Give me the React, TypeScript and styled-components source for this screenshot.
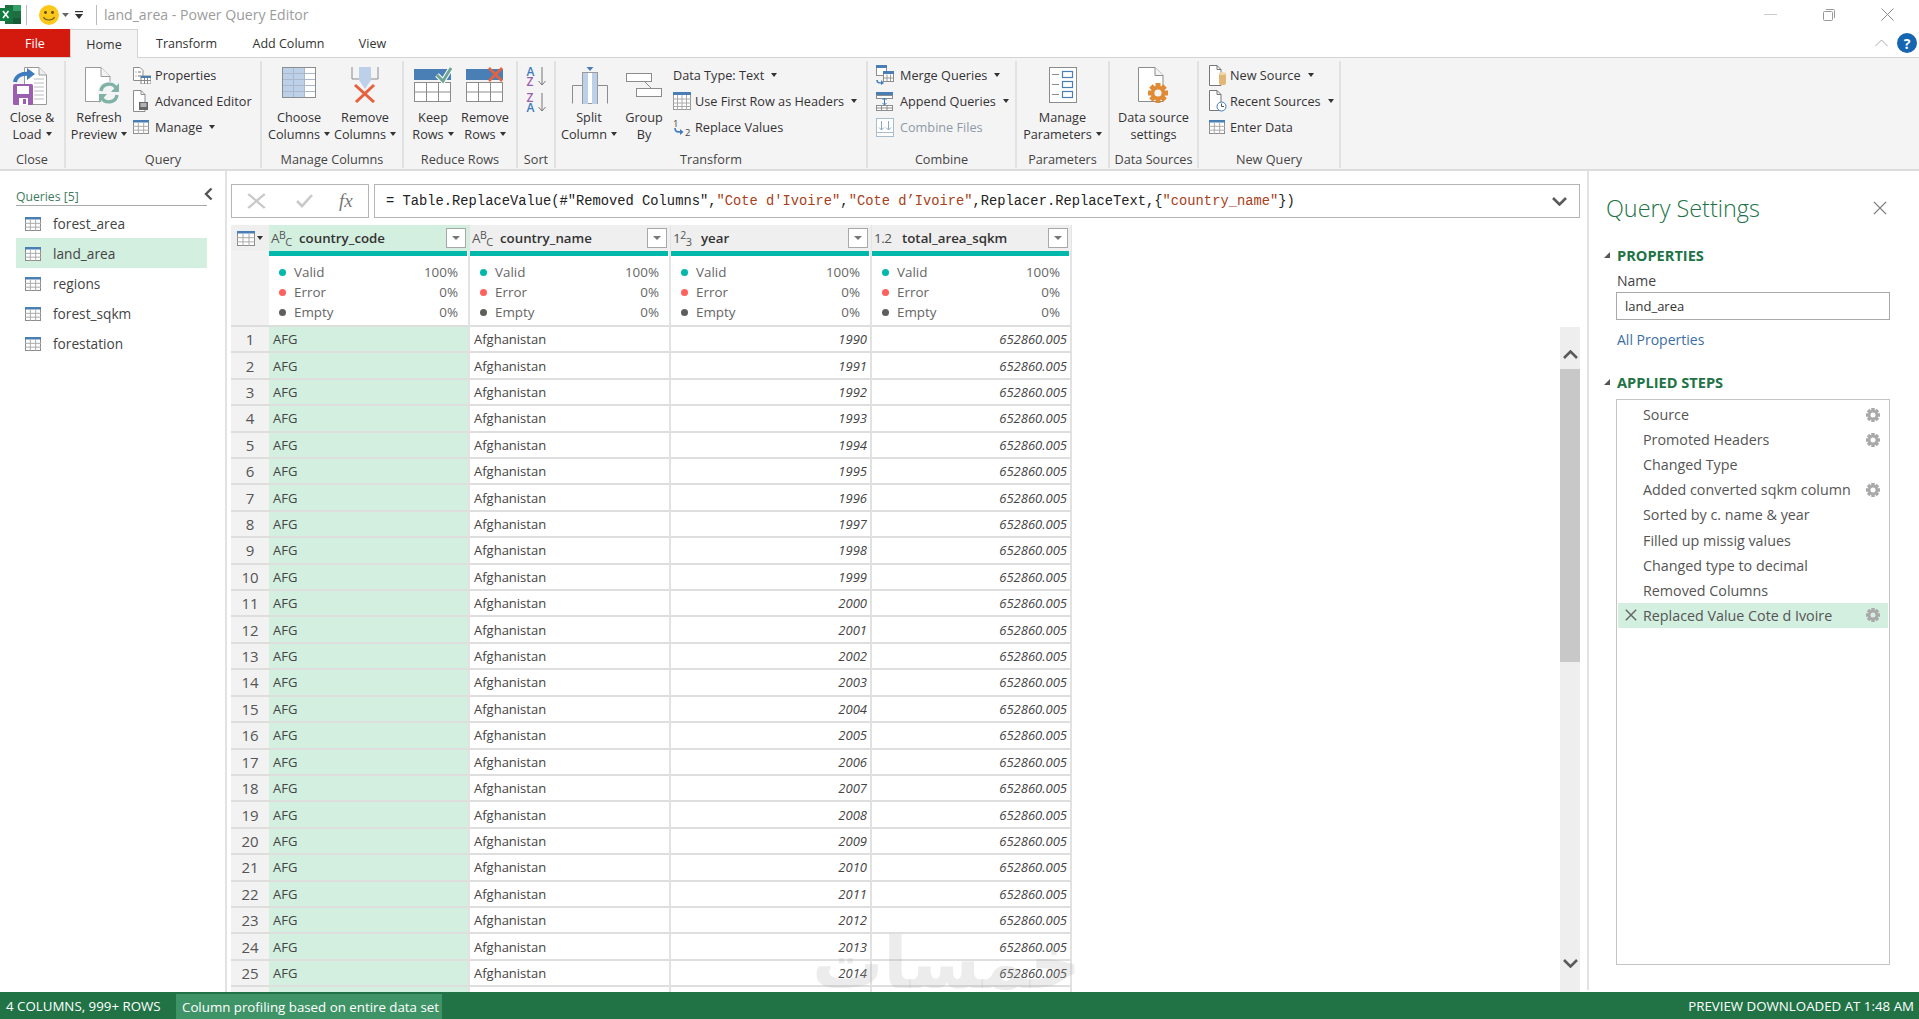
import React from "react";
import styled, { createGlobalStyle } from "styled-components";

const UI = `"Open Sans", "Noto Sans", "Liberation Sans", sans-serif`;

const Global = createGlobalStyle`
  html, body { margin: 0; padding: 0; background: #fff; }
  body { font-family: ${UI}; color: #333; overflow: hidden; }
  * { box-sizing: border-box; }
`;

const Page = styled.div`
  position: relative;
  width: 1919px;
  height: 1019px;
  display: flex;
  flex-direction: column;
  overflow: hidden;
  background: #fff;
`;

/* ---------- title bar ---------- */
const TitleBar = styled.div`
  height: 29px;
  flex: none;
  display: flex;
  align-items: center;
`;
const TitleSep = styled.span<{ $ml: number }>`
  width: 1px;
  height: 20px;
  background: #bbb;
  margin-left: ${(p) => p.$ml}px;
`;
const TitleText = styled.span`
  font-size: 14.1px;
  color: #9c9c9c;
  margin-left: 7px;
  white-space: nowrap;
`;
const WinControls = styled.div`
  margin-left: auto;
  display: flex;
  align-items: center;
  padding-right: 25px;
  gap: 46px;
`;
const QatSlot = styled.span<{ $ml: number }>`
  display: inline-flex;
  margin-left: ${(p) => p.$ml}px;
`;

/* ---------- tabs ---------- */
const TabBar = styled.div`
  height: 29px;
  flex: none;
  display: flex;
  align-items: stretch;
  border-bottom: 1px solid #d4d4d4;
  position: relative;
`;
const Tab = styled.div<{ $w: number; $active?: boolean; $file?: boolean }>`
  width: ${(p) => p.$w}px;
  height: ${(p) => (p.$active ? 29 : 28)}px;
  display: flex;
  align-items: center;
  justify-content: center;
  font-size: 12.5px;
  color: ${(p) => (p.$file ? "#fff" : "#333")};
  background: ${(p) => (p.$file ? "#d4190f" : p.$active ? "#f5f4f5" : "#fff")};
  border: ${(p) => (p.$active ? "1px solid #d4d4d4" : "none")};
  border-bottom: none;
`;
const TabRight = styled.div`
  margin-left: auto;
  display: flex;
  align-items: center;
  gap: 9px;
  padding-right: 2px;
`;
const Help = styled.span`
  width: 20px;
  height: 20px;
  border-radius: 50%;
  background: #1565b0;
  color: #fff;
  font: bold 14px ${UI};
  display: flex;
  align-items: center;
  justify-content: center;
`;

/* ---------- ribbon ---------- */
const Ribbon = styled.div`
  height: 113px;
  flex: none;
  background: #f5f4f5;
  border-bottom: 2px solid #dcdcdc;
  display: flex;
  padding: 3px 0 1px;
`;
const Group = styled.div<{ $w: number }>`
  width: ${(p) => p.$w}px;
  flex: none;
  display: flex;
  flex-direction: column;
  border-right: 2px solid #e3e2e3;
`;
const GroupBody = styled.div<{ $pl?: number }>`
  height: 90px;
  flex: none;
  display: flex;
  padding-left: ${(p) => p.$pl ?? 0}px;
`;
const GroupLabel = styled.div`
  height: 17px;
  line-height: 17px;
  font-size: 12.7px;
  text-align: center;
  color: #444;
  white-space: nowrap;
`;
const BigBtn = styled.div<{ $w: number }>`
  width: ${(p) => p.$w}px;
  flex: none;
  display: flex;
  flex-direction: column;
  align-items: center;
`;
const BigIcon = styled.div`
  height: 48px;
  display: flex;
  align-items: flex-start;
  justify-content: center;
  padding-top: 6px;
`;
const BigText = styled.div`
  font-size: 12.7px;
  line-height: 17px;
  text-align: center;
  color: #333;
  white-space: nowrap;
`;
const Caret = styled.span<{ $ml?: number }>`
  display: inline-block;
  width: 0;
  height: 0;
  border-left: 3.5px solid transparent;
  border-right: 3.5px solid transparent;
  border-top: 4px solid #333;
  margin-left: ${(p) => p.$ml ?? 4}px;
  vertical-align: 3px;
`;
const SmallCol = styled.div<{ $ml?: number }>`
  display: flex;
  flex-direction: column;
  padding-top: 1px;
  margin-left: ${(p) => p.$ml ?? 0}px;
`;
const SmallBtn = styled.div<{ $disabled?: boolean }>`
  height: 26px;
  display: flex;
  align-items: center;
  font-size: 12.7px;
  white-space: nowrap;
  color: ${(p) => (p.$disabled ? "#8d9aa5" : "#333")};
`;
const SmallIcon = styled.span<{ $w?: number }>`
  width: ${(p) => p.$w ?? 22}px;
  flex: none;
  display: flex;
  align-items: center;
`;
const SortCol = styled.div`
  width: 100%;
  display: flex;
  flex-direction: column;
  align-items: center;
  padding-top: 6px;
  gap: 6px;
`;
const SortMark = styled.div`
  width: 19px;
  height: 20px;
  display: flex;
  gap: 2px;
`;
const SortLetters = styled.div`
  width: 9px;
  flex: none;
  display: flex;
  flex-direction: column;
`;
const SortLetter = styled.span<{ $c: string }>`
  height: 10px;
  line-height: 10px;
  font-size: 12px;
  font-weight: 600;
  color: ${(p) => p.$c};
`;

/* ---------- workspace ---------- */
const Workspace = styled.div`
  flex: 1;
  min-height: 0;
  display: flex;
`;
const LeftPane = styled.aside`
  width: 227px;
  flex: none;
  border-right: 2px solid #e2e2e2;
  padding: 18px 18px 0 16px;
  position: relative;
`;
const QueriesHead = styled.div`
  font-size: 12.2px;
  color: #3f7a5e;
  height: 17px;
  line-height: 16px;
  border-bottom: 1px solid #a9a9a9;
  margin-bottom: 2px;
`;
const CollapseSlot = styled.span`
  position: absolute;
  left: 204px;
  top: 16px;
  display: flex;
`;
const QueryRow = styled.div<{ $sel?: boolean }>`
  height: 30px;
  display: flex;
  align-items: center;
  padding: 1px 0 0 9px;
  gap: 12px;
  font-size: 13.7px;
  color: #444;
  background: ${(p) => (p.$sel ? "#d3efe0" : "transparent")};
`;

const Center = styled.main`
  flex: 1;
  min-width: 0;
  display: flex;
  flex-direction: column;
  padding: 13px 7px 0 4px;
`;
const FormulaRow = styled.div`
  height: 34px;
  flex: none;
  display: flex;
  gap: 5px;
  margin-bottom: 7px;
`;
const FxBox = styled.div`
  width: 138px;
  flex: none;
  border: 1px solid #b5b5b5;
  display: flex;
  align-items: center;
  padding-left: 15px;
`;
const FxSlot = styled.span<{ $ml: number }>`
  display: flex;
  margin-left: ${(p) => p.$ml}px;
`;
const FxGlyph = styled.span`
  font: italic 19px "Liberation Serif", serif;
  color: #777;
  margin-left: 26px;
`;
const FormulaBox = styled.div`
  flex: 1;
  min-width: 0;
  border: 1px solid #b5b5b5;
  display: flex;
  align-items: center;
  padding: 0 12px 0 11px;
  font: 13.77px "Liberation Mono", monospace;
  color: #222;
  white-space: pre;
`;
const Str = styled.span`
  color: #a8401a;
`;
const FormulaChevron = styled.span`
  margin-left: auto;
  display: flex;
`;
const GridArea = styled.div`
  flex: 1;
  min-height: 0;
  display: flex;
  justify-content: space-between;
  overflow: hidden;
`;
const Table = styled.div`
  width: 841px;
  flex: none;
  overflow: hidden;
`;
const TR = styled.div`
  display: grid;
  grid-template-columns: 38px 201px 201px 201px 200px;
`;
const CornerCell = styled.div`
  height: 26px;
  background: #efefef;
  display: flex;
  align-items: center;
  padding-left: 6px;
  gap: 2px;
`;
const HeadCell = styled.div<{ $sel?: boolean }>`
  height: 26px;
  background: ${(p) => (p.$sel ? "#d3efe0" : "#efefef")};
  border-right: 1px solid #e4e4e4;
  display: flex;
  align-items: center;
  padding-left: 2px;
  font-size: 13.3px;
  font-weight: 600;
  color: #333;
`;
const TypeGlyph = styled.span`
  width: 28px;
  flex: none;
  font-size: 13.5px;
  font-weight: 400;
  color: #555;
  letter-spacing: -0.5px;
  display: inline-flex;
  align-items: center;
`;
const Sup = styled.span`
  font-size: 10.5px;
  transform: translateY(-3px);
`;
const Sub = styled.span`
  font-size: 11px;
  transform: translateY(3px);
`;
const DropBtn = styled.span`
  margin-left: auto;
  margin-right: 3px;
  width: 20px;
  height: 20px;
  background: #fff;
  border: 1px solid #a8a8a8;
  display: flex;
  align-items: center;
  justify-content: center;
`;
const DropTri = styled.span`
  width: 0;
  height: 0;
  border-left: 4px solid transparent;
  border-right: 4px solid transparent;
  border-top: 4px solid #777;
`;
const IndexProfile = styled.div`
  height: 76px;
  background: #f2f2f2;
  border-bottom: 2px solid #dedede;
`;
const ProfileCell = styled.div`
  height: 76px;
  background: #fff;
  border-right: 2px solid #e4e4e4;
  border-bottom: 2px solid #dedede;
`;
const Strip = styled.div`
  height: 5px;
  background: #01b8aa;
  margin-right: 1px;
`;
const ProfileLines = styled.div`
  padding: 6px 10px 0 10px;
`;
const ProfileLine = styled.div`
  height: 20px;
  display: flex;
  align-items: center;
  font-size: 13.4px;
  color: #666;
`;
const Dot = styled.span<{ $c: string }>`
  width: 7px;
  height: 7px;
  border-radius: 50%;
  background: ${(p) => p.$c};
  margin-right: 8px;
  flex: none;
`;
const Pct = styled.span`
  margin-left: auto;
`;
const IndexCell = styled.div`
  height: 26.42px;
  background: #f2f2f2;
  border-bottom: 2px solid #dedede;
  font-size: 15px;
  color: #555;
  display: flex;
  align-items: center;
  justify-content: center;
`;
const DataCell = styled.div<{ $sel?: boolean; $right?: boolean }>`
  height: 26.42px;
  background: ${(p) => (p.$sel ? "#d3efe0" : "#fff")};
  border-right: 2px solid #e2e2e2;
  border-bottom: 2px solid #dedede;
  font-size: 13px;
  font-style: ${(p) => (p.$right ? "italic" : "normal")};
  color: #444;
  display: flex;
  align-items: center;
  justify-content: ${(p) => (p.$right ? "flex-end" : "flex-start")};
  padding: 0 3px 0 4px;
`;
const ScrollBar = styled.div`
  width: 20px;
  flex: none;
  margin-top: 102px;
  background: #eee;
  display: flex;
  flex-direction: column;
`;
const ScrollEnd = styled.div<{ $bottom?: boolean }>`
  height: 42px;
  display: flex;
  justify-content: center;
  align-items: ${(p) => (p.$bottom ? "flex-start" : "center")};
  padding-top: ${(p) => (p.$bottom ? 9 : 12)}px;
  flex: none;
`;
const ScrollThumb = styled.div`
  height: 293px;
  background: #c8c8c8;
  flex: none;
`;
const ScrollGap = styled.div`
  flex: 1;
`;

const RightPane = styled.aside`
  width: 332px;
  flex: none;
  border-left: 2px solid #e2e2e2;
  padding: 0 29px 0 27px;
  margin-bottom: 2px;
  display: flex;
  flex-direction: column;
`;
const SettingsHead = styled.div`
  height: 74px;
  display: flex;
  align-items: center;
  justify-content: space-between;
  margin-left: -10px;
  font-size: 23.4px;
  font-weight: 300;
  color: #217346;
  padding-right: 3px;
`;
const SectionHead = styled.div<{ $mt?: number }>`
  display: flex;
  align-items: center;
  height: 20px;
  margin-top: ${(p) => p.$mt ?? 0}px;
  margin-left: -12px;
  gap: 7px;
  font-size: 14.6px;
  font-weight: 700;
  color: #217346;
`;
const Tri = styled.span`
  width: 0;
  height: 0;
  border-left: 6px solid transparent;
  border-bottom: 6px solid #555;
`;
const FieldLabel = styled.div`
  font-size: 14px;
  line-height: 18px;
  color: #444;
  margin-top: 7px;
  padding-left: 1px;
`;
const NameInput = styled.div`
  height: 28px;
  border: 1px solid #a9a9a9;
  margin-top: 2px;
  display: flex;
  align-items: center;
  padding-left: 8px;
  font-size: 13px;
  color: #333;
`;
const PropLink = styled.div`
  margin-top: 11px;
  padding-left: 1px;
  font-size: 14px;
  line-height: 18px;
  color: #3a6ea5;
`;
const StepsBox = styled.div`
  height: 566px;
  margin-top: 7px;
  border: 1px solid #c4c4c4;
  padding: 2px 1px 0;
`;
const StepRow = styled.div<{ $sel?: boolean }>`
  height: 25.1px;
  display: flex;
  align-items: center;
  background: ${(p) => (p.$sel ? "#d3efe0" : "transparent")};
  font-size: 14.3px;
  color: #555;
  padding-right: 8px;
`;
const StepX = styled.span`
  width: 25px;
  flex: none;
  display: flex;
  justify-content: center;
`;
const StepGear = styled.span`
  margin-left: auto;
  display: flex;
`;
const StatusBar = styled.footer`
  height: 27px;
  flex: none;
  background: #217346;
  color: #fff;
  font-size: 13.3px;
  display: flex;
  align-items: stretch;
  padding-left: 6px;
  padding-right: 5px;
  white-space: nowrap;
`;
const StatusCount = styled.span`
  width: 170px;
  display: flex;
  align-items: center;
`;
const StatusNote = styled.span`
  width: 266px;
  margin-top: 2px;
  background: #3f9467;
  display: flex;
  align-items: center;
  padding-left: 6px;
`;
const StatusRight = styled.span`
  margin-left: auto;
  display: flex;
  align-items: center;
`;
const Watermark = styled.div`
  position: absolute;
  left: 812px;
  top: 914px;
  font: bold 71px "DejaVu Sans", sans-serif;
  line-height: 100px;
  color: rgba(170, 170, 170, 0.22);
  pointer-events: none;
  white-space: nowrap;
`;

/* ---------- icons ---------- */
const B = "#4a7fb5";
const LB = "#bdd0e9";
const O = "#e8603c";

const ExcelLogo = () => (
  <svg width="21" height="19" viewBox="0 0 21 19">
    <rect x="5" y="0" width="16" height="19" fill="#1e6e42" />
    <rect x="13" y="0" width="8" height="6" fill="#33a06a" />
    <rect x="13" y="13" width="8" height="6" fill="#185c36" />
    <rect x="0" y="3" width="12" height="13" fill="#107c41" />
    <path d="M3 6l5.5 7M8.5 6L3 13" stroke="#fff" strokeWidth="1.6" />
  </svg>
);
const Smiley = () => (
  <svg width="20" height="20" viewBox="0 0 20 20">
    <circle cx="10" cy="10" r="10" fill="#fbc71a" />
    <circle cx="6.5" cy="7.5" r="1.4" fill="#5a4a10" />
    <circle cx="13.5" cy="7.5" r="1.4" fill="#5a4a10" />
    <path d="M4.5 12c2 4 9 4 11 0" stroke="#6a5510" strokeWidth="1.2" fill="none" />
  </svg>
);
const QatCaret = () => (
  <svg width="7" height="9" viewBox="0 0 7 9">
    <path d="M0 3h7L3.5 7z" fill="#666" />
  </svg>
);
const QatMore = () => (
  <svg width="8" height="10" viewBox="0 0 8 10">
    <rect x="0" y="1" width="8" height="1.2" fill="#333" />
    <path d="M0 4h8L4 9z" fill="#333" />
  </svg>
);
const WinMin = () => (
  <svg width="13" height="2" viewBox="0 0 13 2">
    <rect width="13" height="1" fill="#ccc" />
  </svg>
);
const WinRestore = () => (
  <svg width="12" height="12" viewBox="0 0 12 12" fill="none" stroke="#999">
    <rect x="0.5" y="2.5" width="9" height="9" rx="1" />
    <path d="M3 .5h7.5a1 1 0 0 1 1 1V9" />
  </svg>
);
const WinClose = () => (
  <svg width="13" height="13" viewBox="0 0 13 13" stroke="#8a8a8a" strokeWidth="1">
    <path d="M.5.5l12 12M12.5.5l-12 12" />
  </svg>
);
const ChevronUpThin = () => (
  <svg width="13" height="8" viewBox="0 0 13 8" fill="none" stroke="#aaa">
    <path d="M.5 7l6-6 6 6" />
  </svg>
);

const TableIco = ({ w = 16, h = 14 }: { w?: number; h?: number }) => {
  const c1 = w / 3;
  const rows = (h - 2.5) / 3;
  return (
    <svg width={w} height={h} viewBox={`0 0 ${w} ${h}`}>
      <rect x="0.5" y="0.5" width={w - 1} height={h - 1} fill="#fff" stroke="#8c8c8c" />
      <rect x="0" y="0" width={w} height="2.5" fill={B} />
      {[1, 2].map((i) => (
        <path key={i} d={`M${c1 * i} 2.5V${h}`} stroke="#aaa" strokeWidth="1" />
      ))}
      {[1, 2].map((i) => (
        <path key={i} d={`M0 ${2.5 + rows * i}H${w}`} stroke="#aaa" strokeWidth="1" />
      ))}
    </svg>
  );
};

const Gear = ({ size = 14, color = "#a9a9a9", hole = "#fff" }: { size?: number; color?: string; hole?: string }) => (
  <svg width={size} height={size} viewBox="0 0 20 20">
    {[0, 45, 90, 135].map((a) => (
      <rect key={a} x="7.5" y="0" width="5" height="20" fill={color} transform={`rotate(${a} 10 10)`} />
    ))}
    <circle cx="10" cy="10" r="7.2" fill={color} />
    <circle cx="10" cy="10" r="3.6" fill={hole} />
  </svg>
);

const CloseLoadIco = () => (
  <svg width="38" height="38" viewBox="0 0 38 38">
    <path d="M11.5.5H26l7.5 7.5v29.5H11.5z" fill="#fff" stroke="#9a9a9a" />
    <path d="M26 .5V8h7.5" fill="#eee" stroke="#9a9a9a" />
    {[12, 16, 20, 24, 28, 32].map((y) => (
      <path key={y} d={`M21 ${y}h10`} stroke="#bbb" />
    ))}
    <path d="M2 15c1-7 8-9 15-8" fill="none" stroke="#3f7cbf" strokeWidth="4" />
    <path d="M14 1l8 6-8 6z" fill="#3f7cbf" />
    <rect x="0" y="17" width="20" height="21" rx="1.5" fill="#9b5fb0" />
    <rect x="4" y="19" width="12" height="8" fill="#fff" />
    <rect x="6" y="31" width="9" height="7" fill="#fff" />
    <rect x="10" y="32" width="3" height="5" fill="#9b5fb0" />
  </svg>
);
const RefreshIco = () => (
  <svg width="44" height="38" viewBox="-8 0 44 38">
    <path d="M.5.5H16l9 9v25H.5z" fill="#fff" stroke="#9a9a9a" />
    <path d="M16 .5v9h9" fill="#f4f4f4" stroke="#9a9a9a" />
    <circle cx="24" cy="26" r="11.5" fill="#f5f4f5" />
    <path d="M16 24c1-8 12-9 15-3" fill="none" stroke="#7fb3a6" strokeWidth="3.4" />
    <path d="M34 16v9h-8z" fill="#7fb3a6" />
    <path d="M32 28c-1 8-12 9-15 3" fill="none" stroke="#7fb3a6" strokeWidth="3.4" />
    <path d="M14 36v-9h8z" fill="#7fb3a6" />
  </svg>
);
const ChooseIco = () => (
  <svg width="34" height="31" viewBox="0 0 34 31">
    <rect x="0.5" y="0.5" width="33" height="30" fill="#fff" stroke="#8c8c8c" />
    <rect x="1" y="1" width="22" height="29" fill={LB} />
    {[6.5, 12.5, 18.5, 24.5].map((y) => (
      <path key={y} d={`M1 ${y}h32`} stroke="#aab8c9" />
    ))}
    {[11.5, 22.5].map((x) => (
      <path key={x} d={`M${x} 1v29`} stroke="#aab8c9" />
    ))}
  </svg>
);
const RemoveColIco = () => (
  <svg width="28" height="36" viewBox="0 0 28 36">
    <path d="M1 0v12h7M27 0v12h-7" fill="none" stroke="#8c8c8c" />
    <path d="M8 0h12v13l-6 9-6-9z" fill={LB} />
    <path d="M4 18l19 17M23 18L5 35" stroke={O} strokeWidth="3" />
  </svg>
);
const KeepRowsIco = () => (
  <svg width="38" height="35" viewBox="0 0 38 35">
    <rect x="0" y="2" width="37" height="11" fill={B} />
    <rect x="0.5" y="15.5" width="36" height="19" fill="#fff" stroke="#8c8c8c" />
    <path d="M12.5 15v20M24.5 15v20M0 25h37" stroke="#8c8c8c" />
    <path d="M23 8l6 6L37 1" fill="none" stroke="#fff" strokeWidth="5" />
    <path d="M23 8l6 6L37 1" fill="none" stroke="#6fa597" strokeWidth="3" />
  </svg>
);
const RemoveRowsIco = () => (
  <svg width="38" height="35" viewBox="0 0 38 35">
    <rect x="0" y="2" width="37" height="11" fill={B} />
    <rect x="0.5" y="15.5" width="36" height="19" fill="#fff" stroke="#8c8c8c" />
    <path d="M12.5 15v20M24.5 15v20M0 25h37" stroke="#8c8c8c" />
    <path d="M23 1l13 13M36 1L23 14" stroke={O} strokeWidth="2.6" />
  </svg>
);
const SortArrow = () => (
  <svg width="8" height="20" viewBox="0 0 8 20">
    <path d="M4 0v18M.5 14L4 18l3.5-4" fill="none" stroke="#777" />
  </svg>
);
const SplitIco = () => (
  <svg width="38" height="37" viewBox="-2 0 38 37">
    <path d="M14.5 0h7L18 4z" fill={B} />
    <path d="M.5 36.5V18.5h9.5M35.5 36.5V18.5H26" fill="none" stroke="#8c8c8c" />
    <rect x="10.5" y="5.5" width="15" height="31" fill="#fff" stroke="#9a9a9a" />
    <rect x="11" y="6" width="5" height="31" fill={LB} />
    <rect x="20" y="6" width="5" height="31" fill={LB} />
  </svg>
);
const GroupByIco = () => (
  <svg width="37" height="31" viewBox="0 -6 37 31">
    <rect x="0.5" y="0.5" width="25" height="8" fill="#fff" stroke="#8c8c8c" />
    <rect x="10.5" y="15.5" width="25" height="8" fill="#fff" stroke="#8c8c8c" />
    <path d="M18 8l7 7" stroke="#8c8c8c" />
  </svg>
);
const ParamsIco = () => (
  <svg width="28" height="36" viewBox="0 0 28 36">
    <rect x="0.5" y="0.5" width="27" height="35" fill="#fff" stroke="#8c8c8c" />
    {[5, 15, 25].map((y) => (
      <g key={y}>
        <path d={`M3 ${y + 2.5}h7`} stroke="#8c8c8c" />
        <rect x="13.5" y={y - 0.5} width="10" height="6" fill="none" stroke={B} strokeWidth="1.2" />
      </g>
    ))}
  </svg>
);
const DataSourceIco = () => (
  <svg width="32" height="36" viewBox="0 0 32 36">
    <path d="M.5.5H17l8 8v26H.5z" fill="#fff" stroke="#8c8c8c" />
    <path d="M17 .5v8h8" fill="#f4f4f4" stroke="#8c8c8c" />
    <g transform="translate(10 16)">
      <Gear size={20} color="#e08a35" hole="#f5f4f5" />
    </g>
  </svg>
);
const PropsIco = () => (
  <svg width="18" height="17" viewBox="0 0 18 17">
    <path d="M.5.5H7l3 3v10H.5z" fill="#fff" stroke="#8c8c8c" />
    <path d="M2.5 5h1M5 5h3M2.5 9h1M5 9h3" stroke="#777" />
    <rect x="8" y="9" width="10" height="8" fill="#fff" stroke="#888" />
    <rect x="8" y="9" width="10" height="2" fill={B} />
    <path d="M11.5 11v6M14.5 11v6M8 13.5h10" stroke="#888" />
  </svg>
);
const AdvIco = () => (
  <svg width="16" height="22" viewBox="0 0 16 22">
    <path d="M.5.5H8l4 4v17H.5z" fill="#fff" stroke="#8c8c8c" />
    <path d="M8 .5v4h4" fill="none" stroke="#8c8c8c" />
    <rect x="6" y="12" width="9" height="8" fill="#666" />
    <path d="M7.5 14h6M7.5 16h6" stroke="#fff" />
  </svg>
);
const MergeIco = () => (
  <svg width="18" height="20" viewBox="0 0 18 20">
    <rect x="0.5" y="0.5" width="10" height="10" fill="#fff" stroke="#8c8c8c" />
    <rect x="0" y="0" width="11" height="3" fill={B} />
    <rect x="7.5" y="6.5" width="10" height="10" fill="#fff" stroke="#8c8c8c" />
    <rect x="7" y="6" width="11" height="3" fill={B} />
    <path d="M11 9.5v7M14.5 9.5v7M7 13h11" stroke="#999" />
    <path d="M1 15c0 3 2 3 5 3" fill="none" stroke="#3f7cbf" strokeWidth="1.6" />
    <path d="M5 15l3 3-3 2z" fill="#3f7cbf" />
  </svg>
);
const AppendIco = () => (
  <svg width="17" height="19" viewBox="0 0 17 19">
    <rect x="0" y="0" width="17" height="3" fill={B} />
    <rect x="0.5" y="3.5" width="16" height="3" fill="#fff" stroke="#8c8c8c" />
    <rect x="0.5" y="13.5" width="16" height="5" fill="#fff" stroke="#8c8c8c" />
    <path d="M5.5 13v6M11 13v6M0 16h17" stroke="#8c8c8c" />
    <path d="M8.5 6v7M6.5 8l2-2 2 2M6.5 11l2 2 2-2" fill="none" stroke="#3f7cbf" />
  </svg>
);
const CombineIco = () => (
  <svg width="18" height="19" viewBox="0 0 18 19">
    <rect x="0.5" y="0.5" width="17" height="18" fill="#fff" stroke="#a9bccb" />
    <path d="M1 14.5h16" stroke="#a9bccb" />
    <path d="M5.5 3v9M3 9.5l2.5 2.5L8 9.5M12.5 3v9M10 9.5l2.5 2.5L15 9.5" fill="none" stroke="#8da9c2" />
  </svg>
);
const FirstRowIco = () => (
  <svg width="18" height="18" viewBox="0 0 18 18">
    <rect x="0.5" y="0.5" width="17" height="17" fill="#fff" stroke="#999" />
    <rect x="0" y="0" width="18" height="3" fill={B} />
    <path d="M4.5 3v15M9 3v15M13.5 3v15M0 7h18M0 11h18M0 14.5h18" stroke="#aaa" />
  </svg>
);
const ReplaceIco = () => (
  <svg width="20" height="24" viewBox="0 -3 20 24">
    <text x="0" y="9" fontSize="9.5" fontFamily="Open Sans, sans-serif" fill="#444">1</text>
    <text x="12" y="18" fontSize="9.5" fontFamily="Open Sans, sans-serif" fill="#444">2</text>
    <path d="M2 10c0 4 2 4 6 4" fill="none" stroke="#3f7cbf" strokeWidth="1.6" />
    <path d="M7 11l3.5 3L7 17z" fill="#3f7cbf" />
  </svg>
);
const NewSourceIco = () => (
  <svg width="18" height="21" viewBox="0 0 18 21">
    <path d="M.5.5H8l4 4v16H.5z" fill="#fff" stroke="#777" />
    <path d="M8 .5v4h4" fill="none" stroke="#777" />
    <rect x="10" y="8" width="7" height="12" rx="2" fill="#e0b775" />
    <ellipse cx="13.5" cy="8.5" rx="3.5" ry="1.6" fill="#f0d7a8" />
  </svg>
);
const RecentIco = () => (
  <svg width="18" height="23" viewBox="0 0 18 23">
    <path d="M.5.5H8l4 4v16H.5z" fill="#fff" stroke="#777" />
    <path d="M8 .5v4h4" fill="none" stroke="#777" />
    <circle cx="12.5" cy="16.5" r="4.5" fill="#fff" stroke="#3f7cbf" />
    <path d="M12.5 13.5v3h2.5" fill="none" stroke="#555" />
  </svg>
);
const ChevronLeft = () => (
  <svg width="9" height="14" viewBox="0 0 9 14" fill="none" stroke="#555" strokeWidth="2.4">
    <path d="M7.5 1.5L2 7l5.5 5.5" />
  </svg>
);
const ChevronV = ({ up }: { up?: boolean }) => (
  <svg width="15" height="9" viewBox="0 0 15 9" fill="none" stroke="#5a5a5a" strokeWidth="2.6">
    <path d={up ? "M1 8l6.5-6.5L14 8" : "M1 1l6.5 6.5L14 1"} />
  </svg>
);
const CrossIco = ({ w = 15, h = 15, color = "#c9c9c9", sw = 2 }: { w?: number; h?: number; color?: string; sw?: number }) => (
  <svg width={w} height={h} viewBox="0 0 15 15" preserveAspectRatio="none" stroke={color} strokeWidth={sw}>
    <path d="M1 1l13 13M14 1L1 14" />
  </svg>
);
const CheckIco = () => (
  <svg width="17" height="14" viewBox="0 0 17 14" fill="none" stroke="#c9c9c9" strokeWidth="2.6">
    <path d="M1 7l5 5L16 1" />
  </svg>
);

/* ---------- data ---------- */
const COLUMNS = [
  { name: "country_code", type: "abc", sel: true },
  { name: "country_name", type: "abc" },
  { name: "year", type: "123" },
  { name: "total_area_sqkm", type: "dec" },
];
const PROFILE = [
  { label: "Valid", pct: "100%", color: "#01b8aa" },
  { label: "Error", pct: "0%", color: "#fd625e" },
  { label: "Empty", pct: "0%", color: "#605e5c" },
];
const STEPS = [
  { name: "Source", gear: true },
  { name: "Promoted Headers", gear: true },
  { name: "Changed Type" },
  { name: "Added converted sqkm column", gear: true },
  { name: "Sorted by c. name & year" },
  { name: "Filled up missig values" },
  { name: "Changed type to decimal" },
  { name: "Removed Columns" },
  { name: "Replaced Value Cote d Ivoire", gear: true, sel: true },
];
const QUERIES = ["forest_area", "land_area", "regions", "forest_sqkm", "forestation"];
const ROWS = Array.from({ length: 26 }, (_, i) => i);

const TypeMark = ({ type }: { type: string }) => {
  if (type === "abc")
    return (
      <TypeGlyph>
        A<Sup>B</Sup>
        <Sub>C</Sub>
      </TypeGlyph>
    );
  if (type === "123")
    return (
      <TypeGlyph>
        1<Sup>2</Sup>
        <Sub>3</Sub>
      </TypeGlyph>
    );
  return <TypeGlyph>1.2</TypeGlyph>;
};

const Big = ({ w, icon, lines, caret }: { w: number; icon: React.ReactNode; lines: [string, string]; caret?: boolean }) => (
  <BigBtn $w={w}>
    <BigIcon>{icon}</BigIcon>
    <BigText>
      {lines[0]}
      <br />
      {lines[1]}
      {caret && <Caret />}
    </BigText>
  </BigBtn>
);

const Small = ({ icon, text, caret, w, disabled }: { icon?: React.ReactNode; text: string; caret?: boolean; w?: number; disabled?: boolean }) => (
  <SmallBtn $disabled={disabled}>
    {icon && <SmallIcon $w={w}>{icon}</SmallIcon>}
    {text}
    {caret && <Caret $ml={7} />}
  </SmallBtn>
);

const Sort = ({ top, bottom, topC, botC }: { top: string; bottom: string; topC: string; botC: string }) => (
  <SortMark>
    <SortLetters>
      <SortLetter $c={topC}>{top}</SortLetter>
      <SortLetter $c={botC}>{bottom}</SortLetter>
    </SortLetters>
    <SortArrow />
  </SortMark>
);

export default function App() {
  return (
    <Page>
      <Global />
      <TitleBar>
        <ExcelLogo />
        <TitleSep $ml={5} />
        <QatSlot $ml={12}><Smiley /></QatSlot>
        <QatSlot $ml={3}><QatCaret /></QatSlot>
        <QatSlot $ml={6}><QatMore /></QatSlot>
        <TitleSep $ml={13} />
        <TitleText>land_area - Power Query Editor</TitleText>
        <WinControls>
          <WinMin />
          <WinRestore />
          <WinClose />
        </WinControls>
      </TitleBar>

      <TabBar>
        <Tab $w={70} $file>File</Tab>
        <Tab $w={68} $active>Home</Tab>
        <Tab $w={97}>Transform</Tab>
        <Tab $w={107}>Add Column</Tab>
        <Tab $w={61}>View</Tab>
        <TabRight>
          <ChevronUpThin />
          <Help>?</Help>
        </TabRight>
      </TabBar>

      <Ribbon>
        <Group $w={66}>
          <GroupBody>
            <Big w={64} icon={<CloseLoadIco />} lines={["Close &", "Load"]} caret />
          </GroupBody>
          <GroupLabel>Close</GroupLabel>
        </Group>
        <Group $w={196}>
          <GroupBody>
            <Big w={66} icon={<RefreshIco />} lines={["Refresh", "Preview"]} caret />
            <SmallCol $ml={1}>
              <Small icon={<PropsIco />} text="Properties" />
              <Small icon={<AdvIco />} text="Advanced Editor" />
              <Small icon={<TableIco />} text="Manage" caret />
            </SmallCol>
          </GroupBody>
          <GroupLabel>Query</GroupLabel>
        </Group>
        <Group $w={142}>
          <GroupBody $pl={2}>
            <Big w={70} icon={<ChooseIco />} lines={["Choose", "Columns"]} caret />
            <Big w={62} icon={<RemoveColIco />} lines={["Remove", "Columns"]} caret />
          </GroupBody>
          <GroupLabel>Manage Columns</GroupLabel>
        </Group>
        <Group $w={114}>
          <GroupBody $pl={2}>
            <Big w={54} icon={<KeepRowsIco />} lines={["Keep", "Rows"]} caret />
            <Big w={50} icon={<RemoveRowsIco />} lines={["Remove", "Rows"]} caret />
          </GroupBody>
          <GroupLabel>Reduce Rows</GroupLabel>
        </Group>
        <Group $w={38}>
          <GroupBody>
            <SortCol>
              <Sort top="A" bottom="Z" topC="#3f7cbf" botC="#9b5fb0" />
              <Sort top="Z" bottom="A" topC="#9b5fb0" botC="#3f7cbf" />
            </SortCol>
          </GroupBody>
          <GroupLabel>Sort</GroupLabel>
        </Group>
        <Group $w={312}>
          <GroupBody>
            <Big w={66} icon={<SplitIco />} lines={["Split", "Column"]} caret />
            <Big w={44} icon={<GroupByIco />} lines={["Group", "By"]} />
            <SmallCol $ml={7}>
              <Small text="Data Type: Text" caret />
              <Small icon={<FirstRowIco />} text="Use First Row as Headers" caret />
              <Small icon={<ReplaceIco />} text="Replace Values" />
            </SmallCol>
          </GroupBody>
          <GroupLabel>Transform</GroupLabel>
        </Group>
        <Group $w={149}>
          <GroupBody $pl={8}>
            <SmallCol>
              <Small w={24} icon={<MergeIco />} text="Merge Queries" caret />
              <Small w={24} icon={<AppendIco />} text="Append Queries" caret />
              <Small w={24} icon={<CombineIco />} text="Combine Files" disabled />
            </SmallCol>
          </GroupBody>
          <GroupLabel>Combine</GroupLabel>
        </Group>
        <Group $w={93}>
          <GroupBody>
            <Big w={91} icon={<ParamsIco />} lines={["Manage", "Parameters"]} caret />
          </GroupBody>
          <GroupLabel>Parameters</GroupLabel>
        </Group>
        <Group $w={89}>
          <GroupBody>
            <Big w={87} icon={<DataSourceIco />} lines={["Data source", "settings"]} />
          </GroupBody>
          <GroupLabel>Data Sources</GroupLabel>
        </Group>
        <Group $w={142}>
          <GroupBody $pl={10}>
            <SmallCol>
              <Small w={21} icon={<NewSourceIco />} text="New Source" caret />
              <Small w={21} icon={<RecentIco />} text="Recent Sources" caret />
              <Small w={21} icon={<TableIco />} text="Enter Data" />
            </SmallCol>
          </GroupBody>
          <GroupLabel>New Query</GroupLabel>
        </Group>
      </Ribbon>

      <Workspace>
        <LeftPane>
          <QueriesHead>Queries [5]</QueriesHead>
          <CollapseSlot><ChevronLeft /></CollapseSlot>
          {QUERIES.map((q) => (
            <QueryRow key={q} $sel={q === "land_area"}>
              <TableIco />
              {q}
            </QueryRow>
          ))}
        </LeftPane>

        <Center>
          <FormulaRow>
            <FxBox>
              <CrossIco w={19} h={16} />
              <FxSlot $ml={30}><CheckIco /></FxSlot>
              <FxGlyph>fx</FxGlyph>
            </FxBox>
            <FormulaBox>
              {'= Table.ReplaceValue(#"Removed Columns",'}
              <Str>"Cote d'Ivoire"</Str>,<Str>"Cote d’Ivoire"</Str>,Replacer.ReplaceText,{"{"}
              <Str>"country_name"</Str>
              {"})"}
              <FormulaChevron><ChevronV /></FormulaChevron>
            </FormulaBox>
          </FormulaRow>
          <GridArea>
            <Table>
              <TR>
                <CornerCell>
                  <TableIco w={18} h={15} />
                  <Caret $ml={0} />
                </CornerCell>
                {COLUMNS.map((c) => (
                  <HeadCell key={c.name} $sel={c.sel}>
                    <TypeMark type={c.type} />
                    {c.name}
                    <DropBtn><DropTri /></DropBtn>
                  </HeadCell>
                ))}
              </TR>
              <TR>
                <IndexProfile />
                {COLUMNS.map((c) => (
                  <ProfileCell key={c.name}>
                    <Strip />
                    <ProfileLines>
                      {PROFILE.map((p) => (
                        <ProfileLine key={p.label}>
                          <Dot $c={p.color} />
                          {p.label}
                          <Pct>{p.pct}</Pct>
                        </ProfileLine>
                      ))}
                    </ProfileLines>
                  </ProfileCell>
                ))}
              </TR>
              {ROWS.map((i) => (
                <TR key={i}>
                  <IndexCell>{i < 25 ? i + 1 : ""}</IndexCell>
                  <DataCell $sel>{i < 25 ? "AFG" : ""}</DataCell>
                  <DataCell>{i < 25 ? "Afghanistan" : ""}</DataCell>
                  <DataCell $right>{i < 25 ? 1990 + i : ""}</DataCell>
                  <DataCell $right>{i < 25 ? "652860.005" : ""}</DataCell>
                </TR>
              ))}
            </Table>
            <ScrollBar>
              <ScrollEnd><ChevronV up /></ScrollEnd>
              <ScrollThumb />
              <ScrollGap />
              <ScrollEnd $bottom><ChevronV /></ScrollEnd>
            </ScrollBar>
          </GridArea>
        </Center>

        <RightPane>
          <SettingsHead>
            Query Settings
            <CrossIco w={14} h={14} color="#777" sw={1.3} />
          </SettingsHead>
          <SectionHead>
            <Tri />
            PROPERTIES
          </SectionHead>
          <FieldLabel>Name</FieldLabel>
          <NameInput>land_area</NameInput>
          <PropLink>All Properties</PropLink>
          <SectionHead $mt={23}>
            <Tri />
            APPLIED STEPS
          </SectionHead>
          <StepsBox>
            {STEPS.map((s) => (
              <StepRow key={s.name} $sel={s.sel}>
                <StepX>{s.sel && <CrossIco w={12} h={12} color="#666" sw={1.8} />}</StepX>
                {s.name}
                {s.gear && <StepGear><Gear hole={s.sel ? "#d3efe0" : "#fff"} /></StepGear>}
              </StepRow>
            ))}
          </StepsBox>
        </RightPane>
      </Workspace>

      <StatusBar>
        <StatusCount>4 COLUMNS, 999+ ROWS</StatusCount>
        <StatusNote>Column profiling based on entire data set</StatusNote>
        <StatusRight>PREVIEW DOWNLOADED AT 1:48 AM</StatusRight>
      </StatusBar>
      <Watermark>خمسات</Watermark>
    </Page>
  );
}
